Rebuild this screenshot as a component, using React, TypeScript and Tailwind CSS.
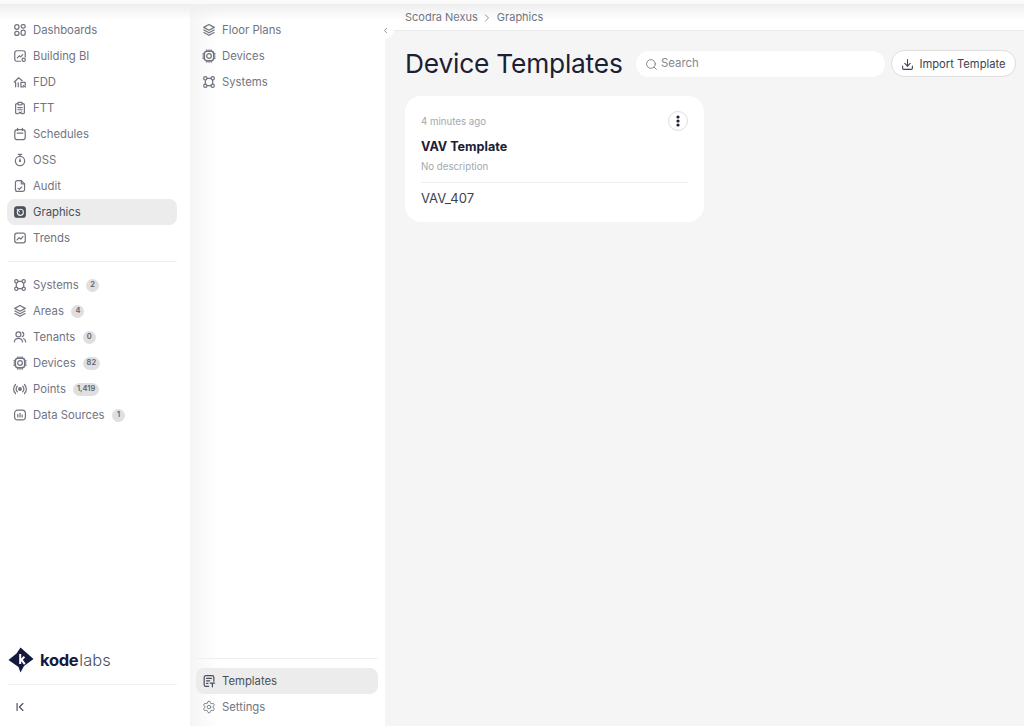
import type { ReactNode } from "react";
import { ChevronFirst, ChevronLeft, ChevronRight, Download, Search, Settings } from "lucide-react";

type IconName =
  | "dashboards"
  | "bi"
  | "fdd"
  | "ftt"
  | "schedules"
  | "oss"
  | "audit"
  | "graphics"
  | "trends"
  | "systems"
  | "layers"
  | "tenants"
  | "devices"
  | "points"
  | "sources"
  | "templates";

// hand drawn to follow the product's icon set, 16 unit box
const iconPaths: Record<IconName, ReactNode> = {
  dashboards: (
    <>
      <rect x="2" y="1.8" width="4.8" height="5.4" rx="2.4" />
      <rect x="9.2" y="1.8" width="4.8" height="4" rx="2" />
      <rect x="2" y="9.6" width="4.8" height="4.6" rx="2.3" />
      <rect x="9.2" y="8.2" width="4.8" height="6" rx="2.4" />
    </>
  ),
  bi: (
    <>
      <path d="M8.5 14H4.5A2.5 2.5 0 0 1 2 11.5V4.5A2.5 2.5 0 0 1 4.5 2h7A2.5 2.5 0 0 1 14 4.5V9" />
      <path d="M5 10.2 7.2 7.8 8.8 9 11 6.5" />
      <circle cx="12.2" cy="12.2" r="1.9" />
    </>
  ),
  fdd: (
    <>
      <path d="M1.5 8 6.5 3.2 10.5 6.5" />
      <path d="M3 8v5.5M6 9v4.5" />
      <path d="M9 8.5h5v3M9 8.5v5h3" />
      <path d="M12 12l2.2 1.8" />
    </>
  ),
  ftt: (
    <>
      <path d="M5.5 3H4.5A1.5 1.5 0 0 0 3 4.5V13a1.5 1.5 0 0 0 1.5 1.5H6M10.5 3h1A1.5 1.5 0 0 1 13 4.5V13a1.5 1.5 0 0 1-1.5 1.5H10" />
      <rect x="5.5" y="1.5" width="5" height="3" rx="1" />
      <path d="M5.5 7.5h5M5.5 10h5M7 12.8l1.2 1.2 1.6-1.6" />
    </>
  ),
  schedules: (
    <>
      <rect x="2" y="3" width="12" height="11.5" rx="3.2" />
      <path d="M5.2 1.5v2.5M10.8 1.5v2.5M4.8 7h6.4" />
    </>
  ),
  oss: (
    <>
      <circle cx="8" cy="9.2" r="5.3" />
      <path d="M6 1.5h4M8 1.5v2.4M8 9.2V6.8" />
      <circle cx="8" cy="9.2" r="0.6" />
    </>
  ),
  audit: (
    <>
      <path d="M9.5 1.8H5A2.2 2.2 0 0 0 2.8 4v8A2.2 2.2 0 0 0 5 14.2h6a2.2 2.2 0 0 0 2.2-2.2V5.5z" />
      <path d="M9.5 1.8v3.7h3.7" />
      <path d="M5.8 10.8l1.5 1 2.6-2.6" />
    </>
  ),
  graphics: (
    <>
      <rect x="2" y="2" width="12" height="12" rx="2.6" fill="currentColor" />
      <circle cx="8.4" cy="8.4" r="3.5" stroke="#ececec" fill="none" strokeWidth="1.3" />
      <path d="M4.6 4.8 7.6 8" stroke="#ececec" strokeWidth="1.2" />
    </>
  ),
  trends: (
    <>
      <rect x="2" y="2.5" width="12" height="11" rx="2.4" />
      <path d="M4.6 10.2 7 7.6 9 9.2 11.4 6.2" />
    </>
  ),
  systems: (
    <>
      <circle cx="3.8" cy="3.8" r="1.9" />
      <circle cx="12.2" cy="3.8" r="1.9" />
      <circle cx="3.8" cy="12.2" r="1.9" />
      <circle cx="12.2" cy="12.2" r="1.9" />
      <path d="M5.7 3.8h4.6M5.7 12.2h4.6M3.8 5.7v4.6M12.2 5.7v4.6" />
    </>
  ),
  layers: (
    <>
      <path d="M8 1.8 14 5 8 8.2 2 5z" />
      <path d="M2.2 8 8 11.1 13.8 8" />
      <path d="M2.2 10.9 8 14.1 13.8 10.9" />
    </>
  ),
  tenants: (
    <>
      <circle cx="6.2" cy="5" r="2.8" />
      <path d="M10.6 2.4a2.8 2.8 0 0 1 0 5.2" />
      <path d="M1.5 13.5a4.8 4.8 0 0 1 9.4 0" />
      <path d="M12.2 10a4.6 4.6 0 0 1 2.3 3.5" />
    </>
  ),
  devices: (
    <>
      <rect x="2.6" y="2.6" width="10.8" height="10.8" rx="3" strokeWidth="1.8" />
      <circle cx="8" cy="8" r="2.7" />
      <path d="M5.5 1v1.5M8 1v1.5M10.5 1v1.5M5.5 13.5V15M8 13.5V15M10.5 13.5V15M1 5.5h1.5M1 8h1.5M1 10.5h1.5M13.5 5.5H15M13.5 8H15M13.5 10.5H15" />
    </>
  ),
  points: (
    <>
      <circle cx="8" cy="8" r="1.5" fill="currentColor" />
      <path d="M4.9 4.8a4.5 4.5 0 0 0 0 6.4M11.1 4.8a4.5 4.5 0 0 1 0 6.4" />
      <path d="M2.9 2.8a7.3 7.3 0 0 0 0 10.4M13.1 2.8a7.3 7.3 0 0 1 0 10.4" />
    </>
  ),
  sources: (
    <>
      <rect x="1.8" y="2.5" width="12.4" height="11" rx="3.6" />
      <path d="M5.5 7.2v3M8 6v4.2M10.5 8v2.2" />
    </>
  ),
  templates: (
    <>
      <path d="M7.5 14.2H4.5A2 2 0 0 1 2.5 12.2V3.8a2 2 0 0 1 2-2h7a2 2 0 0 1 2 2v4.4" />
      <path d="M5.2 5h5.6M5.2 7.8h3.6M5.2 10.6h1.6" />
      <path d="M9.4 10.4h5M11.9 10.4v4.2" />
    </>
  ),
};

function NavIcon({ name }: { name: IconName }) {
  return (
    <svg
      width="14"
      height="14"
      viewBox="0 0 16 16"
      fill="none"
      stroke="currentColor"
      strokeWidth="1.4"
      strokeLinecap="round"
      strokeLinejoin="round"
      className="shrink-0"
    >
      {iconPaths[name]}
    </svg>
  );
}

interface NavItem {
  label: string;
  icon: IconName;
  count?: string;
  active?: boolean;
}

const mainNav: NavItem[] = [
  { label: "Dashboards", icon: "dashboards" },
  { label: "Building BI", icon: "bi" },
  { label: "FDD", icon: "fdd" },
  { label: "FTT", icon: "ftt" },
  { label: "Schedules", icon: "schedules" },
  { label: "OSS", icon: "oss" },
  { label: "Audit", icon: "audit" },
  { label: "Graphics", icon: "graphics", active: true },
  { label: "Trends", icon: "trends" },
];

const dataNav: NavItem[] = [
  { label: "Systems", icon: "systems", count: "2" },
  { label: "Areas", icon: "layers", count: "4" },
  { label: "Tenants", icon: "tenants", count: "0" },
  { label: "Devices", icon: "devices", count: "82" },
  { label: "Points", icon: "points", count: "1,419" },
  { label: "Data Sources", icon: "sources", count: "1" },
];

const graphicsNav: NavItem[] = [
  { label: "Floor Plans", icon: "layers" },
  { label: "Devices", icon: "devices" },
  { label: "Systems", icon: "systems" },
];

function NavRow({ item }: { item: NavItem }) {
  return (
    <div
      className={`flex h-[26px] items-center rounded-lg pl-[6px] text-[11.3px] ${
        item.active ? "bg-[#ececec] text-[#4b4f5c]" : "text-[#71747f]"
      }`}
    >
      <NavIcon name={item.icon} />
      <span className="ml-[6px]">{item.label}</span>
      {item.count && (
        <span className="ml-[7.5px] flex h-[13px] min-w-[13px] items-center justify-center rounded-full bg-[#dfdfe1] px-[3.5px] text-[7.5px] font-semibold text-[#5f626d]">
          {item.count}
        </span>
      )}
    </div>
  );
}

function KodeLogo() {
  return (
    <div className="flex items-center">
      <svg width="26" height="26" viewBox="0 0 26 26">
        <path d="M12.5 0.5 L25.5 12 L16 19 L12.5 25.5 L10.5 20 L0.5 13 L8.5 6.5 Z" fill="#14193f" />
        <path d="M12.2 7 V17 M12.4 13.8 L16.4 9.8 M13.6 12.8 L16.8 17.2" stroke="#ffffff" strokeWidth="2" fill="none" />
      </svg>
      <span className="ml-[6px] text-[16.5px] font-bold leading-none tracking-[-0.3px] text-[#14193f]">kode</span>
      <span className="ml-[1px] text-[16.5px] font-light leading-none text-[#4b4f5c]">labs</span>
    </div>
  );
}

export default function App() {
  return (
    <div className="relative flex h-[726px] w-[1024px] overflow-hidden bg-[#f5f5f5] font-['Inter',sans-serif]">
      {/* soft shadow below the browser chrome */}
      <div className="pointer-events-none absolute inset-x-0 top-0 z-10 h-[20px] bg-[linear-gradient(to_bottom,#fafafa_0,#fafafa_4px,#eeeeee_4px,transparent_100%)]" />

      {/* Main sidebar */}
      <aside className="flex w-[190px] shrink-0 flex-col bg-white pr-[13px] pl-[7px] pt-[17px]">
        {mainNav.map((item) => (
          <NavRow key={item.label} item={item} />
        ))}
        <div className="my-[10px] ml-[1px] h-px w-[169px] bg-[#f0f0f0]" />
        {dataNav.map((item) => (
          <NavRow key={item.label} item={item} />
        ))}
        <div className="mt-auto ml-px w-[169px]">
          <KodeLogo />
          <div className="mt-[11px] h-px bg-[#f0f0f0]" />
          <div className="flex h-[41px] items-start pt-[15px] pl-[5px] text-[#4b4f5c]">
            <ChevronFirst size={14} strokeWidth={2} />
          </div>
        </div>
      </aside>

      {/* Graphics sub navigation */}
      <aside className="relative flex w-[195px] shrink-0 flex-col bg-[linear-gradient(to_right,#f5f5f5,#ffffff_28px)] pr-[7px] pl-[6px] pt-[17px] pb-[6px]">
        {graphicsNav.map((item) => (
          <NavRow key={item.label} item={item} />
        ))}
        <div className="mt-auto mb-[9px] h-px bg-[#f0f0f0]" />
        <NavRow item={{ label: "Templates", icon: "templates", active: true }} />
        <div className="flex h-[26px] items-center pl-[6px] text-[11.3px] text-[#71747f]">
          <Settings size={14} strokeWidth={1.5} className="shrink-0" />
          <span className="ml-[6px]">Settings</span>
        </div>
        <button className="absolute top-[21px] -right-[9px] z-20 flex h-[18px] w-[18px] items-center justify-center rounded-full bg-white text-[#8a8d96]">
          <ChevronLeft size={9} strokeWidth={2.4} />
        </button>
      </aside>

      {/* Content */}
      <main className="flex min-w-0 flex-1 flex-col">
        <div className="flex h-[31px] shrink-0 items-center border-b border-[#ececec] bg-white pl-[20px] pt-[5px] text-[11px] text-[#71747f]">
          <div className="relative z-20 flex items-center gap-[3.5px]">
            <span>Scodra Nexus</span>
            <ChevronRight size={12} strokeWidth={1.6} />
            <span>Graphics</span>
          </div>
        </div>

        <div className="flex items-center pt-[19px] pl-[20px] pr-[8px]">
          <h1 className="w-[231px] shrink-0 text-[26.3px] leading-[27px] font-normal tracking-[-0.2px] whitespace-nowrap text-[#1c2035]">
            Device Templates
          </h1>
          <div className="flex h-[26px] w-[249px] items-center rounded-[13px] bg-white pl-[9px] pt-px text-[11.4px] text-[#85878f]">
            <Search size={13} strokeWidth={1.8} />
            <span className="ml-[3px]">Search</span>
          </div>
          <button className="ml-[6px] flex h-[27px] w-[125px] items-center justify-center rounded-[13px] border border-[#dedede] bg-white pt-px text-[11.2px] text-[#3d4150]">
            <Download size={13} strokeWidth={2} />
            <span className="ml-[5px]">Import Template</span>
          </button>
        </div>

        <div className="mt-[19px] ml-[20px] w-[299px] rounded-2xl bg-white px-4 pt-[15px]">
          <div className="flex h-[20px] items-center justify-between">
            <span className="pt-[3px] text-[9.7px] text-[#a5a7ae]">4 minutes ago</span>
            <span className="flex h-[20px] w-[20px] items-center justify-center rounded-full border border-[#dedede] text-[#1c2035]">
              <svg width="4" height="12" viewBox="0 0 4 12" fill="currentColor">
                <circle cx="2" cy="2" r="1.6" />
                <circle cx="2" cy="6" r="1.6" />
                <circle cx="2" cy="10" r="1.6" />
              </svg>
            </span>
          </div>
          <p className="mt-[6px] text-[12.6px] leading-[20px] font-bold text-[#1c2035]">VAV Template</p>
          <p className="mt-[2px] text-[9.7px] leading-[16px] text-[#a5a7ae]">No description</p>
          <div className="mt-[7px] h-px bg-[#eeeeee]" />
          <p className="pt-[7px] pb-[16px] text-[13px] leading-[16px] text-[#3d4150]">VAV_407</p>
        </div>
      </main>
    </div>
  );
}
